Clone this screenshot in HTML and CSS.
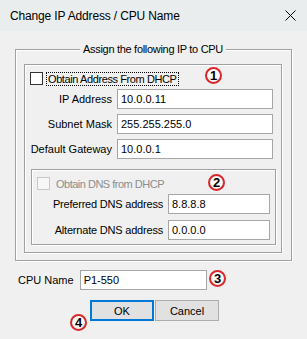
FILE: index.html
```html
<!DOCTYPE html>
<html>
<head>
<meta charset="utf-8">
<link rel="stylesheet" href="styles.css">
</head>
<body>
<div class="window">
  <div class="titlebar">
    <span class="title">Change IP Address / CPU Name</span>
    <svg class="close" width="11" height="11" viewBox="0 0 11 11"><path d="M0.5 0.5 L10.5 10.5 M10.5 0.5 L0.5 10.5" stroke="#000" stroke-width="1" fill="none"/></svg>
  </div>
  <div class="content">
    <div class="group outer">
      <div class="legend">Assign the following IP to CPU</div>
      <div class="group inner">
        <div class="check-row">
          <span class="checkbox"></span>
          <span class="check-label focus">Obtain Address From DHCP</span>
        </div>
        <div class="row first">
          <span class="label">IP Address</span>
          <span class="input wide">10.0.0.11</span>
        </div>
        <div class="row">
          <span class="label">Subnet Mask</span>
          <span class="input wide">255.255.255.0</span>
        </div>
        <div class="row">
          <span class="label">Default Gateway</span>
          <span class="input wide">10.0.0.1</span>
        </div>
        <div class="group dns">
          <div class="check-row">
            <span class="checkbox disabled"></span>
            <span class="check-label gray">Obtain DNS from DHCP</span>
          </div>
          <div class="row first dns-row">
            <span class="label dns-label">Preferred DNS address</span>
            <span class="input narrow">8.8.8.8</span>
          </div>
          <div class="row dns-row second">
            <span class="label dns-label">Alternate DNS address</span>
            <span class="input narrow">0.0.0.0</span>
          </div>
        </div>
      </div>
    </div>
    <div class="cpu-row">
      <span class="cpu-label">CPU Name</span>
      <span class="input cpu">P1-550</span>
    </div>
    <div class="buttons">
      <span class="btn default">OK</span>
      <span class="btn">Cancel</span>
    </div>
  </div>
  <span class="badge b1">1</span>
  <span class="badge b2">2</span>
  <span class="badge b3">3</span>
  <span class="badge b4">4</span>
</div>
</body>
</html>
```
FILE: styles.css
```css
html, body {
  margin: 0;
  padding: 0;
  background: #f0f0f0;
}
.window {
  position: relative;
  width: 307px;
  height: 339px;
  background: #f0f0f0;
  font-family: "Liberation Sans", Arial, sans-serif;
  font-size: 11px;
  color: #000;
  overflow: hidden;
}
.titlebar {
  height: 31px;
  background: #eaedee;
  display: flex;
  align-items: center;
  justify-content: space-between;
  padding: 0 11px 0 10px;
}
.title {
  font-size: 12px;
  letter-spacing: -0.15px;
  font-family: "Liberation Sans", Arial, sans-serif;
}
.close {
  display: block;
}
.content {
  padding: 18px 15px 0 15px;
}
.group {
  border: 1px solid #a0a0a0;
  box-shadow: inset 1px 1px #fff, 1px 1px #fff;
}
.outer {
  padding: 0 9px 7px 8px;
}
.legend {
  width: fit-content;
  margin: -7px auto 0;
  padding: 0 3px;
  background: #f0f0f0;
  line-height: 13px;
  letter-spacing: -0.3px;
  position: relative;
}
.inner {
  margin-top: 8px;
  padding: 7px 5px 7px 5px;
}
.check-row {
  display: flex;
  align-items: center;
  height: 13px;
}
.checkbox {
  width: 11px;
  height: 11px;
  border: 1px solid #333;
  background: #fff;
  flex: none;
}
.checkbox.disabled {
  border-color: #c8c8c8;
  background: #f7f7f7;
}
.check-label {
  margin-left: 3px;
  line-height: 12px;
  padding: 0 1px;
  border: 1px solid transparent;
}
.check-label.focus {
  border: 1px dotted #000;
  letter-spacing: -0.4px;
}
.check-label.gray {
  color: #8d8d8d;
  margin-left: 4px;
  letter-spacing: -0.5px;
}
.row {
  display: flex;
  align-items: center;
  margin-top: 5px;
}
.row.first {
  margin-top: 4px;
}
.label {
  width: 82px;
  text-align: right;
  margin-right: 5px;
  flex: none;
}
.input {
  box-sizing: border-box;
  height: 20px;
  border: 1px solid #a6a6a6;
  background: #fff;
  padding: 0 3px;
  line-height: 18px;
}
.input.wide {
  width: 156px;
}
.dns {
  margin: 10px 0 0 1px;
  padding: 7px 5px 4px 5px;
}
.dns-label {
  width: 126px;
  letter-spacing: -0.2px;
}
.row.second {
  margin-top: 6px;
}
.input.narrow {
  width: 102px;
}
.cpu-row {
  display: flex;
  align-items: center;
  margin-top: 9px;
  padding-left: 3px;
}
.cpu-label {
  margin-right: 6px;
}
.input.cpu {
  width: 127px;
}
.buttons {
  display: flex;
  gap: 1px;
  margin-top: 10px;
  padding-left: 75px;
}
.btn {
  box-sizing: border-box;
  width: 64px;
  height: 21px;
  border: 1px solid #adadad;
  background: #e1e1e1;
  display: flex;
  align-items: center;
  justify-content: center;
}
.btn.default {
  border-color: #0078d7;
  box-shadow: inset 0 0 0 1px #0078d7;
}
.badge {
  position: absolute;
  box-sizing: border-box;
  width: 17px;
  height: 17px;
  border-radius: 50%;
  border: 2px solid #d9262b;
  background: radial-gradient(circle at 50% 35%, #ffffff 45%, #e6e6e6 100%);
  font-family: "Liberation Sans", Arial, sans-serif;
  font-weight: bold;
  font-size: 13px;
  line-height: 13px;
  text-align: center;
  color: #000;
}
.b1 { left: 205px; top: 67px; }
.b2 { left: 208px; top: 174px; }
.b3 { left: 209px; top: 270px; }
.b4 { left: 70px; top: 314px; }
```
